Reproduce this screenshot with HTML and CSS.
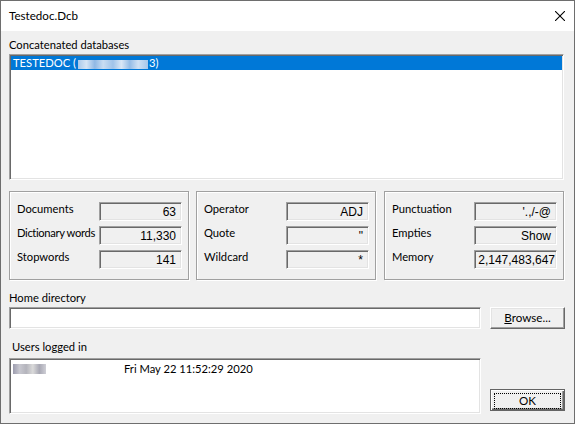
FILE: index.html
```html
<!DOCTYPE html>
<html>
<head>
    <title>Testedoc.Dcb</title>
    <link rel="stylesheet" href="styles.css">
</head>
<body>
<div class="window">
    <div class="titlebar">
        <span class="title">Testedoc.Dcb</span>
        <svg class="close" width="10" height="10" viewBox="0 0 10 10">
            <path d="M0 0 L10 10 M10 0 L0 10" stroke="#000" stroke-width="1.1" fill="none"/>
        </svg>
    </div>
    <div class="content">
        <div class="label">Concatenated databases</div>
        <div class="listbox db-list">
            <div class="row selected">TESTEDOC (<span class="blur blur-ip"></span>3)</div>
        </div>

        <div class="groups">
            <div class="group">
                <div class="field-row"><span class="field-label">Documents</span><span class="field">63</span></div>
                <div class="field-row"><span class="field-label squeeze">Dictionary words</span><span class="field">11,330</span></div>
                <div class="field-row"><span class="field-label">Stopwords</span><span class="field">141</span></div>
            </div>
            <div class="group">
                <div class="field-row"><span class="field-label">Operator</span><span class="field">ADJ</span></div>
                <div class="field-row"><span class="field-label">Quote</span><span class="field">"</span></div>
                <div class="field-row"><span class="field-label">Wildcard</span><span class="field">*</span></div>
            </div>
            <div class="group">
                <div class="field-row"><span class="field-label">Punctuation</span><span class="field">'.,/-@</span></div>
                <div class="field-row"><span class="field-label">Empties</span><span class="field">Show</span></div>
                <div class="field-row"><span class="field-label">Memory</span><span class="field tight">2,147,483,647</span></div>
            </div>
        </div>

        <div class="label gap-top">Home directory</div>
        <div class="dir-row">
            <div class="edit"></div>
            <button class="btn"><u>B</u>rowse...</button>
        </div>

        <div class="label gap-top indent">Users logged in</div>
        <div class="users-row">
            <div class="listbox users">
                <div class="user-row"><span class="blur blur-name"></span><span class="login-time">Fri May 22 11:52:29 2020</span></div>
            </div>
            <button class="btn default"><span class="focus">OK</span></button>
        </div>
    </div>
</div>
</body>
</html>
```

FILE: styles.css
```css
html, body {
margin: 0;
padding: 0;
}

body {
font-family: Lato, "Liberation Sans", sans-serif;
font-size: 11.2px;
color: #000;
}

.window {
width: 575px;
height: 424px;
box-sizing: border-box;
border: 1px solid #6e6e6e;
background-color: #f0f0f0;
display: flex;
flex-direction: column;
}

.titlebar {
height: 30px;
background-color: #fff;
display: flex;
align-items: center;
justify-content: space-between;
padding-left: 8px;
padding-right: 9px;
flex-shrink: 0;
}

.title {
font-size: 11.6px;
margin-top: -2px;
}

.close {
margin-top: -1px;
}

.content {
padding: 7px 10px 0 8px;
}

.label {
line-height: 14px;
height: 14px;
white-space: nowrap;
}

.gap-top {
margin-top: 11px;
}

.indent {
padding-left: 3px;
}

.listbox {
background-color: #fff;
border-style: solid;
border-width: 1px;
border-color: #a0a0a0 #fff #fff #a0a0a0;
box-shadow: inset 1px 1px 0 #696969, inset -1px -1px 0 #e3e3e3;
box-sizing: border-box;
}

.db-list {
margin-top: 2px;
height: 126px;
padding: 1px 1px;
}

.row {
height: 14px;
line-height: 14px;
padding-left: 2px;
}

.selected {
background-color: #0078d7;
color: #fff;
}

.blur {
display: inline-block;
vertical-align: middle;
}

.blur-ip {
width: 70px;
height: 9px;
margin: 0 1px 0 2px;
background: linear-gradient(90deg, #a9c9ea 0, #d6e5f5 12%, #8fb8e4 24%, #c9ddf2 36%, #9fc3e9 50%, #d9e7f6 62%, #94bce6 74%, #cfe1f4 86%, #a5c7ea 100%);
}

.groups {
margin-top: 11px;
display: flex;
gap: 7px;
}

.group {
width: 180px;
height: 89px;
box-sizing: border-box;
border: 1px solid #a0a0a0;
box-shadow: inset 1px 1px 0 #fff, 1px 1px 0 #fff;
padding: 10px 6px 0 6px;
display: flex;
flex-direction: column;
gap: 5px;
}

.group:last-child {
margin-left: 1px;
}

.field-row {
display: flex;
height: 19px;
}

.field-label {
flex: 1;
min-width: 0;
line-height: 14px;
padding-left: 1px;
white-space: nowrap;
}

.squeeze {
letter-spacing: -0.35px;
}

.field {
flex-shrink: 0;
width: 83px;
height: 19px;
box-sizing: border-box;
border-style: solid;
border-width: 1px;
border-color: #a0a0a0 #fff #fff #a0a0a0;
box-shadow: inset 1px 1px 0 #696969, inset -1px -1px 0 #e3e3e3;
text-align: right;
padding-right: 5px;
padding-top: 2px;
font-family: "Liberation Sans", sans-serif;
font-size: 12px;
line-height: 15px;
white-space: nowrap;
}

.tight {
padding-right: 1px;
}

.dir-row {
margin-top: 2px;
display: flex;
justify-content: space-between;
align-items: flex-start;
}

.edit {
width: 472px;
height: 22px;
box-sizing: border-box;
background-color: #fff;
border-style: solid;
border-width: 1px;
border-color: #a0a0a0 #fff #fff #a0a0a0;
box-shadow: inset 1px 1px 0 #696969, inset -1px -1px 0 #e3e3e3;
}

.btn {
width: 75px;
height: 22px;
margin-right: -1px;
box-sizing: border-box;
background-color: #f0f0f0;
border-style: solid;
border-width: 1px;
border-color: #fff #696969 #696969 #fff;
box-shadow: inset -1px -1px 0 #a0a0a0, inset 1px 1px 0 #e3e3e3;
font-family: Lato, "Liberation Sans", sans-serif;
font-size: 11.6px;
color: #000;
padding: 0;
line-height: 18px;
}

.users-row {
margin-top: 4px;
display: flex;
justify-content: space-between;
}

.users {
width: 472px;
height: 56px;
padding: 3px 2px;
}

.user-row {
display: flex;
align-items: center;
height: 14px;
line-height: 14px;
}

.blur-name {
width: 33px;
height: 10px;
margin-left: 1px;
background: linear-gradient(90deg, #9c9cae 0, #c8c8d0 20%, #b4b4bc 40%, #dadada 60%, #a8a8b4 80%, #cfcfd6 100%);
}

.login-time {
margin-left: 78px;
}

.default {
align-self: flex-end;
margin-bottom: 3px;
border: 1px solid #646464;
box-shadow: inset 1px 1px 0 #fff, inset -1px -1px 0 #696969, inset -2px -2px 0 #a0a0a0;
padding: 3px;
}

.focus {
display: block;
height: 14px;
line-height: 13px;
border: 1px dotted #000;
}
```
